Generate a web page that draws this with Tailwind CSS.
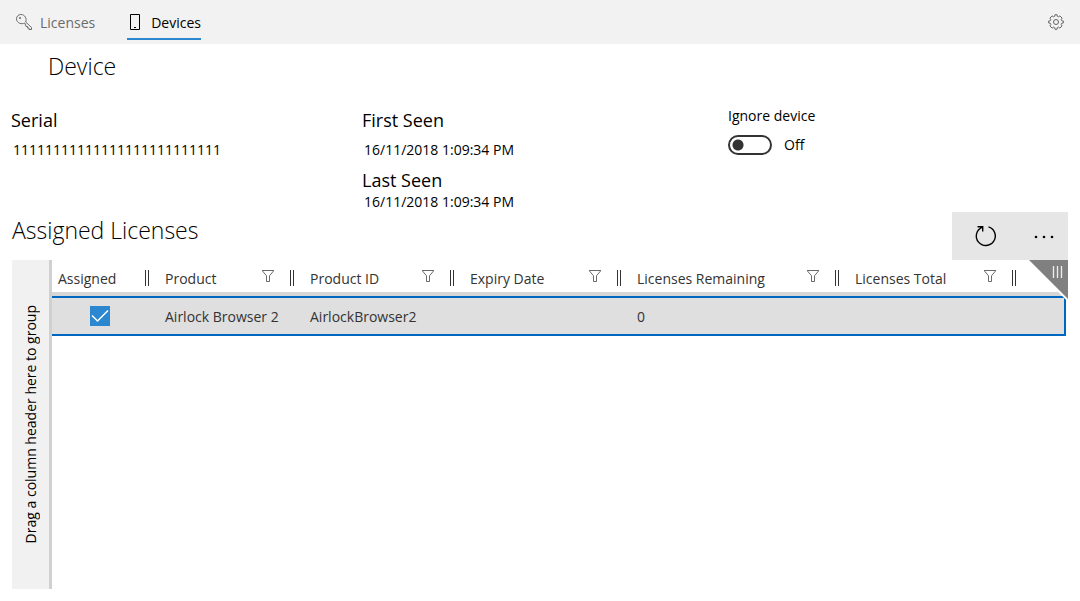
<!DOCTYPE html>
<html lang="en">
<head>
<meta charset="utf-8">
<meta name="viewport" content="width=device-width, initial-scale=1">
<title>Device</title>
<script src="https://cdn.jsdelivr.net/npm/@tailwindcss/browser@4"></script>
</head>
<body class="flex h-screen flex-col bg-white font-['Open_Sans','Noto_Sans',sans-serif] text-sm text-black">
<svg class="hidden" aria-hidden="true">
  <symbol id="funnel" viewBox="0 0 14 14"><path d="M1 1.500h12M1.500 2l4 4.800v5.700h3V6.800l4-4.800" fill="none" stroke="#6a6a6a"/></symbol>
</svg>
<header class="flex h-11 shrink-0 items-center bg-[#f2f2f2] px-4">
  <nav class="flex h-full items-center gap-8">
    <a href="#licenses" class="flex h-full items-center gap-2 text-[#6b6b6b]">
      <svg class="size-4" viewBox="0 0 16 16" fill="none" stroke="currentColor"><path d="M8.800 9C6 10.700.5 9.300.5 4.800.5 2.400 2.400.5 4.800.5c4.400 0 6.200 4.400 4.900 7.500l5.800 5.500v2h-2.500v-1.500h-1.500v-1.500h-1.500z"/><circle cx="4" cy="4" r=".7"/></svg>
      <span class="pt-0.5">Licenses</span>
    </a>
    <a href="#devices" aria-current="page" class="relative flex h-full items-center gap-2 after:absolute after:inset-x-0 after:top-[38px] after:h-0.5 after:bg-[#2b88d0]">
      <svg class="size-4" viewBox="0 0 16 16" fill="none" stroke="currentColor"><path d="M3.500.5h9v15h-9zM7 13.500h2"/></svg>
      <span class="pt-0.5">Devices</span>
    </a>
  </nav>
  <button type="button" aria-label="Settings" class="ml-auto text-[#666]">
    <svg class="size-4" viewBox="0 0 16 16" fill="none" stroke="currentColor"><path d="M6.700 2.300 7 .7h2l.3 1.600 1.200.5L11.900 1.900l2.200 2.200-.9 1.400.5 1.200 1.600.3v2l-1.600.3-.5 1.200.9 1.400-2.200 2.200-1.400-.9-1.200.5-.3 1.600H7l-.3-1.600-1.200-.5-1.400.9-2.200-2.200.9-1.400-.5-1.200L.7 9V7l1.600-.3.5-1.200-.9-1.400 2.200-2.200 1.400.9z"/><circle cx="8" cy="8" r="2.500"/></svg>
  </button>
</header>
<main class="flex min-h-0 flex-1 flex-col px-3 pb-3">
  <h1 class="pl-9 pt-1 text-[23px] leading-9 font-light">Device</h1>
  <section class="-ml-px grid grid-cols-[351px_366px_1fr] pt-6">
    <dl>
      <dt class="text-lg leading-6">Serial</dt>
      <dd class="pt-2 pl-0.5 leading-5">11111111111111111111111111</dd>
    </dl>
    <dl>
      <dt class="text-lg leading-6">First Seen</dt>
      <dd class="pt-2 pb-2 pl-0.5 leading-5">16/11/2018 1:09:34 PM</dd>
      <dt class="text-lg leading-6">Last Seen</dt>
      <dd class="pl-0.5 leading-5">16/11/2018 1:09:34 PM</dd>
    </dl>
    <div class="leading-4">
      <label for="ignore">Ignore device</label>
      <div class="flex items-center gap-3 pt-[11px]">
        <input id="ignore" type="checkbox" role="switch" class="h-5 w-11 appearance-none rounded-full border-2 border-[#333] bg-[radial-gradient(circle_at_8px_8px,#333_5px,transparent_6px)]">
        <span>Off</span>
      </div>
    </div>
  </section>
  <div class="flex items-center justify-between">
    <h2 class="pb-3 text-[23px] leading-8 font-light">Assigned Licenses</h2>
    <div class="flex h-12 bg-[#e6e6e6]">
      <button type="button" aria-label="Refresh" class="flex w-[68px] items-center justify-center">
        <svg class="size-6" viewBox="0 0 24 24" fill="none" stroke="currentColor" stroke-width="1.400"><path d="M14.500 2.900a9.500 9.500 0 1 1-6.500.4M3.500 2.700H8.700V7.500"/></svg>
      </button>
      <button type="button" aria-label="More" class="flex w-12 items-center justify-center">
        <svg class="size-6" viewBox="0 0 24 24"><circle cx="4" cy="13" r="1.300"/><circle cx="12" cy="13" r="1.300"/><circle cx="20" cy="13" r="1.300"/></svg>
      </button>
    </div>
  </div>
  <section class="relative flex min-h-0 flex-1">
    <div class="flex w-10 shrink-0 items-center justify-center border-r-3 border-[#d0d0d0] bg-[#f1f1f1]">
      <span class="rotate-180 whitespace-nowrap [writing-mode:vertical-rl]">Drag a column header here to group</span>
    </div>
    <div class="min-w-0 flex-1 pr-0.5">
      <table class="w-full table-fixed border-separate border-spacing-0 text-left text-[#333]">
        <colgroup><col class="w-[97px]"><col class="w-[145px]"><col class="w-[160px]"><col class="w-[167px]"><col class="w-[218px]"><col class="w-[177px]"><col></colgroup>
        <thead>
          <tr class="h-9 *:border-b-4 *:border-[#d6d6d6] *:p-0 *:pt-1 *:font-normal">
            <th scope="col"><div class="flex items-center pl-1.5"><span class="pt-0.5">Assigned</span><i class="ml-auto h-4 w-1 border-x border-[#333]"></i></div></th>
            <th scope="col"><div class="flex items-center pl-4"><span class="pt-0.5">Product</span><button type="button" aria-label="Filter Product" class="mr-[15px] ml-auto"><svg class="mb-1 size-3.5"><use href="#funnel"/></svg></button><i class="h-4 w-1 border-x border-[#333]"></i></div></th>
            <th scope="col"><div class="flex items-center pl-4"><span class="pt-0.5">Product ID</span><button type="button" aria-label="Filter Product ID" class="mr-[15px] ml-auto"><svg class="mb-1 size-3.5"><use href="#funnel"/></svg></button><i class="h-4 w-1 border-x border-[#333]"></i></div></th>
            <th scope="col"><div class="flex items-center pl-4"><span class="pt-0.5">Expiry Date</span><button type="button" aria-label="Filter Expiry Date" class="mr-[15px] ml-auto"><svg class="mb-1 size-3.5"><use href="#funnel"/></svg></button><i class="h-4 w-1 border-x border-[#333]"></i></div></th>
            <th scope="col"><div class="flex items-center pl-4"><span class="pt-0.5">Licenses Remaining</span><button type="button" aria-label="Filter Licenses Remaining" class="mr-[15px] ml-auto"><svg class="mb-1 size-3.5"><use href="#funnel"/></svg></button><i class="h-4 w-1 border-x border-[#333]"></i></div></th>
            <th scope="col"><div class="flex items-center pl-4"><span class="pt-0.5">Licenses Total</span><button type="button" aria-label="Filter Licenses Total" class="mr-[15px] ml-auto"><svg class="mb-1 size-3.5"><use href="#funnel"/></svg></button><i class="h-4 w-1 border-x border-[#333]"></i></div></th>
            <td></td>
          </tr>
        </thead>
        <tbody>
          <tr class="h-10 bg-[#dfdfdf] *:border-y-2 *:border-[#0067c0] *:pt-0.5 *:pr-0 *:pb-0 *:pl-4">
            <td class="pt-0!"><span class="relative ml-[22px] block size-5"><input type="checkbox" checked aria-label="Assigned" class="block size-5 appearance-none bg-[#2b88d0]"><svg class="pointer-events-none absolute inset-0 size-5" viewBox="0 0 20 20" fill="none" stroke="#fff" stroke-width="1.500"><path d="M2 9.500 7.500 15 18 4.500"/></svg></span></td>
            <td>Airlock Browser 2</td>
            <td>AirlockBrowser2</td>
            <td></td>
            <td>0</td>
            <td></td>
            <td class="border-r-2"></td>
          </tr>
        </tbody>
      </table>
    </div>
    <button type="button" aria-label="Choose columns" class="absolute top-0 right-0">
      <svg class="h-10 w-10" viewBox="0 0 40 40"><path d="M1 0l39 39" stroke="#fff" stroke-width="4"/><path d="M1 0H40V39z" fill="#808080"/><path d="M25.500 6v12M29.500 6v12M33.500 6v12" stroke="#eee" stroke-width="1.300"/></svg>
    </button>
  </section>
</main>
</body>
</html>
